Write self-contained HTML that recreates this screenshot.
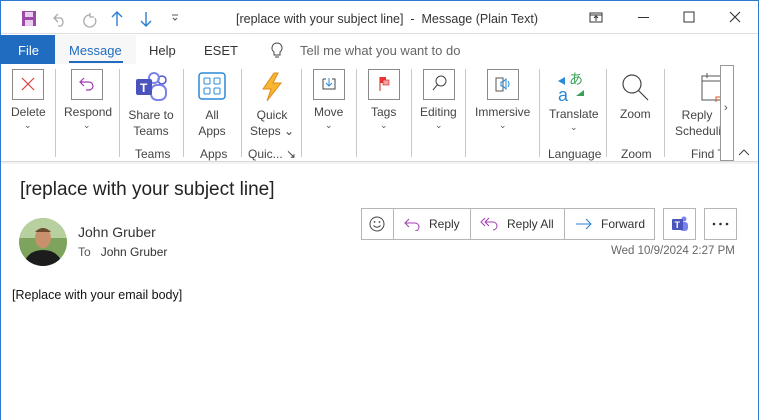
<!DOCTYPE html>
<html><head><meta charset="utf-8"><style>
*{margin:0;padding:0;box-sizing:border-box}
body{width:759px;height:420px;overflow:hidden;background:#fff;font-family:"Liberation Sans",sans-serif;position:relative;color:#333}
.a{position:absolute}
.t{position:absolute;font-size:12px;color:#444;white-space:nowrap}
.c{text-align:center}
.box{position:absolute;width:32px;height:31px;border:1px solid #8a8a8a;background:#fff}
.sep{position:absolute;top:69px;width:1px;height:88px;background:#c8c8c8}
.chev{position:absolute;font-size:9px;color:#555}
.btn{position:absolute;top:208px;height:32px;border:1px solid #b5b5b5;background:#fff;font-size:12px;color:#333}
</style></head><body>
<div class="a" style="left:0;top:0;width:1px;height:420px;background:#2b79d0"></div>
<div class="a" style="right:0;top:0;width:1px;height:420px;background:#2b79d0"></div>
<div class="a" style="left:0;top:0;width:759px;height:1px;background:#2b79d0"></div>
<svg class="a" style="left:20px;top:10px" width="160" height="18" viewBox="0 0 160 18">
<rect x="2" y="1" width="14" height="15" fill="#9b4aa8"/><rect x="5" y="2" width="8" height="5" fill="#e8cfee"/><rect x="5" y="10" width="8" height="6" fill="#e8cfee"/>
<path d="M38 4 L34 8 L38 12 M34 8 H41 A5 5 0 0 1 41 16 H38" fill="none" stroke="#aaa" stroke-width="1.3"/>
<path d="M70 5 A6 6 0 1 0 75 8 M70 3 V7 H74" fill="none" stroke="#aaa" stroke-width="1.3"/>
<path d="M97 16 V2 M92 7 L97 2 L102 7" fill="none" stroke="#2b7fd0" stroke-width="1.4"/>
<path d="M126 2 V16 M121 11 L126 16 L131 11" fill="none" stroke="#2b7fd0" stroke-width="1.4"/>
<path d="M152 5 H158 M153 8 L155 10 L157 8" fill="none" stroke="#555" stroke-width="1.1"/>
</svg>
<div class="t" style="left:236px;top:12px;font-size:12.5px;color:#333">[replace with your subject line]&nbsp; - &nbsp;Message (Plain Text)</div>
<svg class="a" style="left:588px;top:10px" width="160" height="16" viewBox="0 0 160 16">
<rect x="2" y="3" width="12" height="9" fill="none" stroke="#333"/><path d="M2 5 H14 M8 11 V6 M6 8 L8 6 L10 8" fill="none" stroke="#333"/>
<path d="M50 7.5 H61" stroke="#333"/>
<rect x="96" y="2" width="10" height="10" fill="none" stroke="#333"/>
<path d="M142 2 L152 12 M152 2 L142 12" stroke="#333" stroke-width="1.1"/>
</svg>
<div class="a" style="left:1px;top:33px;width:757px;height:1px;background:#e0e0e0"></div>
<div class="a" style="left:0;top:35px;width:55px;height:29px;background:#1f6cc0;color:#fff;font-size:13px;padding:8px 0 0 18px">File</div>
<div class="a" style="left:55px;top:35px;width:81px;height:29px;background:#f7f7f7"></div>
<div class="t" style="left:69px;top:43px;font-size:13px;color:#1f6cc0">Message</div>
<div class="a" style="left:69px;top:61px;width:54px;height:2px;background:#1f6cc0"></div>
<div class="t" style="left:149px;top:43px;font-size:13px;color:#333">Help</div>
<div class="t" style="left:204px;top:43px;font-size:13px;color:#333">ESET</div>
<svg class="a" style="left:270px;top:42px" width="14" height="18"><path d="M7 1 A5 5 0 0 0 4 10 V13 H10 V10 A5 5 0 0 0 7 1 Z M5 15 H9" fill="none" stroke="#444"/></svg>
<div class="t" style="left:300px;top:43px;font-size:13px;color:#666">Tell me what you want to do</div>
<div class="box" style="left:12px;top:69px"></div>
<svg class="a" style="left:12px;top:69px" width="32" height="31"><path d="M10 9 L22 21 M22 9 L10 21" stroke="#e04040" stroke-width="1.2"/></svg>
<div class="t" style="left:11px;top:105px">Delete</div><div class="chev" style="left:24px;top:120px">⌄</div>
<div class="sep" style="left:55px"></div>
<div class="box" style="left:71px;top:69px"></div>
<svg class="a" style="left:71px;top:69px" width="32" height="31"><path d="M13 9 L9 13 L13 17 M9 13 H18 A4 4 0 0 1 18 21 H15" fill="none" stroke="#a03cb0" stroke-width="1.2"/></svg>
<div class="t" style="left:64px;top:105px">Respond</div><div class="chev" style="left:83px;top:120px">⌄</div>
<div class="sep" style="left:119px"></div>
<svg class="a" style="left:135px;top:70px" width="34" height="32"><circle cx="27" cy="10" r="4" fill="none" stroke="#5059c9" stroke-width="1.5"/><circle cx="19" cy="8" r="5" fill="none" stroke="#7b83eb" stroke-width="2"/><rect x="16" y="15" width="15" height="15" rx="6" fill="none" stroke="#7b83eb" stroke-width="2"/><rect x="1" y="9" width="16" height="16" rx="2" fill="#4b53bc"/><text x="5" y="22" font-size="12" font-weight="bold" fill="#fff" font-family="Liberation Sans">T</text></svg>
<div class="t c" style="left:124px;top:107px;width:54px;line-height:16px">Share to<br>Teams</div>
<div class="t" style="left:135px;top:147px">Teams</div>
<div class="sep" style="left:183px"></div>
<svg class="a" style="left:198px;top:72px" width="28" height="28"><rect x="1" y="1" width="26" height="26" rx="3" fill="none" stroke="#2b8ad8" stroke-width="1.5"/><rect x="6" y="6" width="6" height="6" rx="1" fill="none" stroke="#2b8ad8"/><rect x="16" y="6" width="6" height="6" rx="1" fill="none" stroke="#2b8ad8"/><rect x="6" y="16" width="6" height="6" rx="1" fill="none" stroke="#2b8ad8"/><rect x="16" y="16" width="6" height="6" rx="1" fill="none" stroke="#2b8ad8"/></svg>
<div class="t c" style="left:190px;top:107px;width:44px;line-height:16px">All<br>Apps</div>
<div class="t" style="left:200px;top:147px">Apps</div>
<div class="sep" style="left:241px"></div>
<svg class="a" style="left:260px;top:72px" width="24" height="30"><path d="M14 1 L3 17 H11 L7 29 L21 11 H13 L18 1 Z" fill="#f7b531" stroke="#e08a1c"/></svg>
<div class="t c" style="left:247px;top:107px;width:50px;line-height:16px">Quick<br>Steps ⌄</div>
<div class="t" style="left:248px;top:147px">Quic... ↘</div>
<div class="sep" style="left:301px"></div>
<div class="box" style="left:313px;top:69px"></div>
<svg class="a" style="left:313px;top:69px" width="32" height="31"><path d="M10 10 V20 H22 V10 H19 M13 10 H10" fill="none" stroke="#444"/><path d="M16 9 V17 M13 14 L16 17 L19 14" fill="none" stroke="#2b8ad8"/></svg>
<div class="t" style="left:314px;top:105px">Move</div><div class="chev" style="left:325px;top:120px">⌄</div>
<div class="sep" style="left:356px"></div>
<div class="box" style="left:368px;top:69px"></div>
<svg class="a" style="left:368px;top:69px" width="32" height="31"><path d="M12 8 V22" stroke="#c22" /><rect x="12" y="8" width="6" height="6" fill="#e33"/><rect x="15" y="11" width="6" height="5" fill="#f4a0a0" stroke="#c22" stroke-width=".6"/></svg>
<div class="t" style="left:371px;top:105px">Tags</div><div class="chev" style="left:380px;top:120px">⌄</div>
<div class="sep" style="left:411px"></div>
<div class="box" style="left:423px;top:69px"></div>
<svg class="a" style="left:423px;top:69px" width="32" height="31"><circle cx="18" cy="12" r="5" fill="none" stroke="#444"/><path d="M14.5 15.5 L10 21" stroke="#444"/></svg>
<div class="t" style="left:420px;top:105px">Editing</div><div class="chev" style="left:435px;top:120px">⌄</div>
<div class="sep" style="left:465px"></div>
<div class="box" style="left:487px;top:69px"></div>
<svg class="a" style="left:487px;top:69px" width="32" height="31"><path d="M9 9 H16 V22 H9 Z" fill="none" stroke="#555"/><path d="M14 13 H16 L19 10 V20 L16 17 H14 Z" fill="none" stroke="#2b8ad8"/><path d="M21 12 Q23 15 21 18" fill="none" stroke="#2b8ad8"/></svg>
<div class="t" style="left:475px;top:105px">Immersive</div><div class="chev" style="left:499px;top:120px">⌄</div>
<div class="sep" style="left:539px"></div>
<svg class="a" style="left:557px;top:72px" width="30" height="30"><text x="12" y="12" font-size="14" fill="#3aa15a" font-family="Noto Sans CJK JP,sans-serif">あ</text><text x="1" y="29" font-size="18" fill="#2b8ad8" font-family="Liberation Sans">a</text><path d="M1 9 L8 5 V13 Z" fill="#2b8ad8"/><path d="M27 18 L19 24 H27 Z" fill="#3aa15a"/></svg>
<div class="t" style="left:549px;top:107px">Translate</div><div class="chev" style="left:570px;top:122px">⌄</div>
<div class="t" style="left:548px;top:147px">Language</div>
<div class="sep" style="left:606px"></div>
<svg class="a" style="left:620px;top:72px" width="32" height="32"><circle cx="12" cy="12" r="9" fill="none" stroke="#444" stroke-width="1.2"/><path d="M18.5 18.5 L28 28" stroke="#444" stroke-width="1.2"/></svg>
<div class="t" style="left:620px;top:107px">Zoom</div>
<div class="t" style="left:621px;top:147px">Zoom</div>
<div class="sep" style="left:664px"></div>
<div class="a" style="left:670px;top:66px;width:50px;height:95px;overflow:hidden">
<svg class="a" style="left:30px;top:6px" width="22" height="30"><rect x="2" y="4" width="20" height="24" fill="none" stroke="#555"/><path d="M2 9 H22 M7 1 V6" stroke="#555"/><rect x="16" y="25" width="6" height="6" fill="none" stroke="#e0521e"/></svg>
<div class="t" style="left:5px;top:41px;line-height:16px">&nbsp;&nbsp;Reply<br>Scheduling</div>
<div class="t" style="left:21px;top:81px">Find T</div>
</div>
<div class="a" style="left:720px;top:65px;width:14px;height:96px;border:1px solid #999;background:#fff;font-size:11px;padding-top:36px;padding-left:3px;color:#444">›</div>
<svg class="a" style="left:738px;top:149px" width="12" height="8"><path d="M1 6 L6 1 L11 6" fill="none" stroke="#444"/></svg>
<div class="a" style="left:1px;top:161px;width:757px;height:1px;background:#d8d8d8"></div>
<div class="a" style="left:1px;top:162px;width:757px;height:2px;background:#f3f3f3"></div>
<div class="t" style="left:20px;top:179px;font-size:19px;color:#222">[replace with your subject line]</div>
<svg class="a" style="left:19px;top:218px" width="48" height="48"><defs><clipPath id="cp"><circle cx="24" cy="24" r="24"/></clipPath></defs><g clip-path="url(#cp)"><rect width="48" height="48" fill="#7ea35c"/><rect y="0" width="48" height="20" fill="#b8cfa0"/><ellipse cx="24" cy="20" rx="8" ry="10" fill="#c9906e"/><path d="M16 14 Q24 6 32 14" fill="#6b4a2e"/><path d="M4 48 Q8 32 24 32 Q40 32 44 48 Z" fill="#1c1c1c"/></g></svg>
<div class="t" style="left:78px;top:224px;font-size:14px;color:#333">John Gruber</div>
<div class="t" style="left:78px;top:245px;font-size:12px;color:#555">To &nbsp; <span style="color:#333">John Gruber</span></div>
<div class="btn" style="left:361px;width:33px"></div>
<svg class="a" style="left:369px;top:216px" width="16" height="16"><circle cx="8" cy="8" r="7" fill="none" stroke="#444"/><circle cx="5.5" cy="6" r=".9" fill="#444"/><circle cx="10.5" cy="6" r=".9" fill="#444"/><path d="M4.5 9.5 Q8 13 11.5 9.5" fill="none" stroke="#444"/></svg>
<div class="btn" style="left:393px;width:78px;padding:8px 0 0 35px">Reply</div>
<svg class="a" style="left:404px;top:217px" width="18" height="14"><path d="M5 2 L1 6 L5 10 M1 6 H11 A4 4 0 0 1 11 14" fill="none" stroke="#a03cb0"/></svg>
<div class="btn" style="left:470px;width:95px;padding:8px 0 0 36px">Reply All</div>
<svg class="a" style="left:480px;top:217px" width="20" height="14"><path d="M5 1 L1 5 L5 9 M9 1 L5 5 L9 9 M5 5 H13 A4 4 0 0 1 13 13" fill="none" stroke="#a03cb0"/></svg>
<div class="btn" style="left:564px;width:91px;padding:8px 0 0 36px">Forward</div>
<svg class="a" style="left:575px;top:218px" width="18" height="12"><path d="M1 6 H16 M11 1 L16 6 L11 11" fill="none" stroke="#2b7fd0"/></svg>
<div class="btn" style="left:663px;width:33px"></div>
<svg class="a" style="left:670px;top:215px" width="20" height="18"><circle cx="14" cy="4" r="2.5" fill="#7b83eb"/><rect x="10" y="7" width="8" height="9" rx="3" fill="#7b83eb"/><rect x="2" y="4" width="11" height="11" rx="1" fill="#4b53bc"/><text x="4.5" y="13" font-size="9" font-weight="bold" fill="#fff" font-family="Liberation Sans">T</text></svg>
<div class="btn" style="left:704px;width:33px"></div>
<svg class="a" style="left:712px;top:222px" width="18" height="4"><circle cx="2" cy="2" r="1.3" fill="#333"/><circle cx="8.5" cy="2" r="1.3" fill="#333"/><circle cx="15" cy="2" r="1.3" fill="#333"/></svg>
<div class="t" style="left:611px;top:245px;font-size:11.5px;color:#666">Wed 10/9/2024 2:27 PM</div>
<div class="t" style="left:12px;top:288px;font-size:12.5px;color:#111">[Replace with your email body]</div>
</body></html>
